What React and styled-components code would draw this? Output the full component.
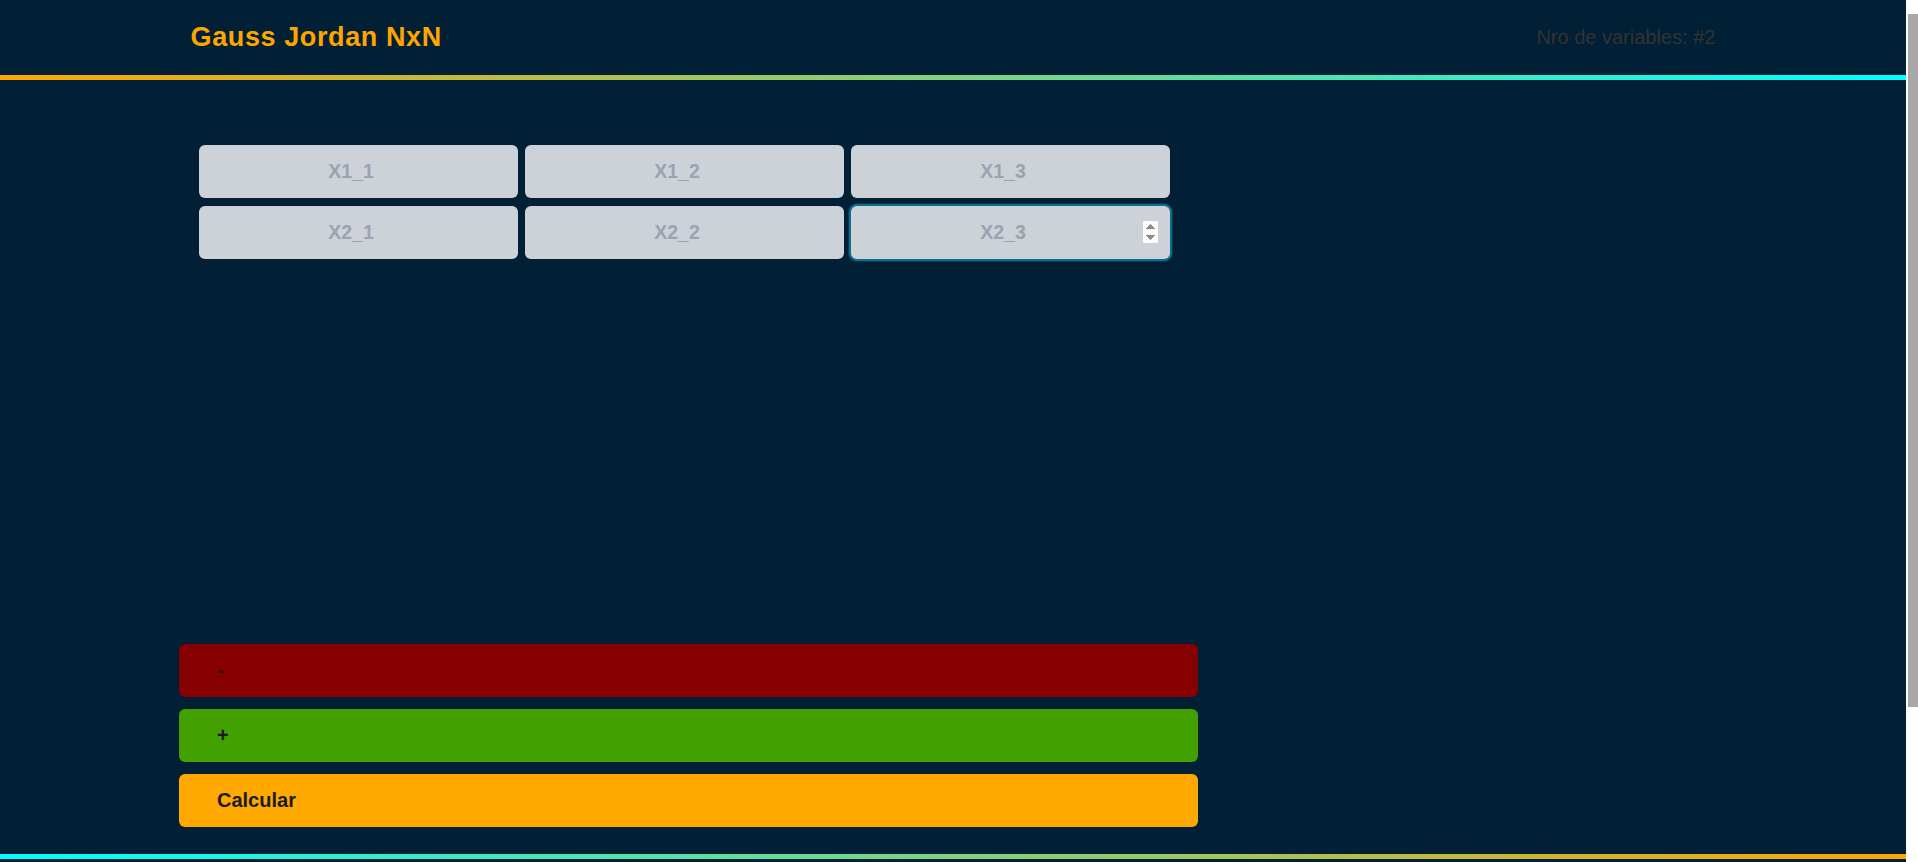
import styled, { createGlobalStyle } from 'styled-components';

const GlobalStyle = createGlobalStyle`
  html,
  body {
    margin: 0;
    font-family: 'Liberation Sans', Arial, sans-serif;
  }

  body {
    background:
      linear-gradient(
        180deg,
        #fff 0 14px,
        #a8a8a8 14px 707px,
        #fff 707px
      ) right top / 10px 862px no-repeat fixed,
      #fff;
  }

  * {
    box-sizing: border-box;
  }
`;

const cells = [
  ['X1_1', 'X1_2', 'X1_3'],
  ['X2_1', 'X2_2', 'X2_3'],
];

const App = () => {
  return (
    <>
      <GlobalStyle />
      <Page>
        <Header>
          <h1>Gauss Jordan NxN</h1>
          <span className='counter'>Nro de variables: #2</span>
        </Header>
        <Divider />
        <Main>
          <Matrix>
            {cells.flat().map((name, i) => (
              <Cell
                key={name}
                type='number'
                placeholder={name}
                autoFocus={i === 5}
              />
            ))}
          </Matrix>
          <Actions>
            <ActionButton $bg='#870000'>-</ActionButton>
            <ActionButton $bg='#42a000'>+</ActionButton>
            <ActionButton $bg='#ffa800'>Calcular</ActionButton>
          </Actions>
        </Main>
        <Divider $reverse />
        <Footer />
      </Page>
    </>
  );
};

const Page = styled.div`
  margin-right: 12px;
  background: #011f35;
`;

const Header = styled.header`
  width: 80%;
  height: 75px;
  margin: 0 auto;
  display: flex;
  align-items: center;
  justify-content: space-between;

  h1 {
    margin: 0;
    font-size: 27px;
    letter-spacing: 0.6px;
    font-weight: 700;
    color: #ffa500;
  }

  .counter {
    font-size: 20px;
    color: #333;
  }
`;

const Divider = styled.div`
  height: 5px;
  background: linear-gradient(
    90deg,
    ${(p) => (p.$reverse ? '#00ffff, #ffa500' : '#ffa500, #00ffff')}
  );
`;

const Main = styled.main`
  width: 1019px;
  margin-left: 179px;
  padding: 65px 0 27px;
`;

const Matrix = styled.div`
  display: grid;
  grid-template-columns: repeat(3, 319px);
  gap: 8px 7px;
  padding-left: 20px;
`;

const Cell = styled.input`
  height: 53px;
  padding: 0 12px;
  border: none;
  border-radius: 6px;
  background: #cdd2d9;
  text-align: center;
  font-family: inherit;
  font-size: 19.5px;
  font-weight: 700;
  color: #111;
  outline: none;

  &::placeholder {
    color: #9ca3af;
  }

  &:focus {
    box-shadow: 0 0 0 2px #0f6d8c, 0 0 0 3px #093a52;
  }
`;

const Actions = styled.div`
  margin-top: 385px;
  display: flex;
  flex-direction: column;
  gap: 12px;
`;

const ActionButton = styled.button`
  height: 53px;
  padding: 0 38px;
  border: none;
  border-radius: 6px;
  background: ${(p) => p.$bg};
  text-align: left;
  font-family: inherit;
  font-size: 20px;
  font-weight: 700;
  color: #1b1b1b;
  cursor: pointer;
`;

const Footer = styled.footer`
  height: 180px;
`;

export default App;
